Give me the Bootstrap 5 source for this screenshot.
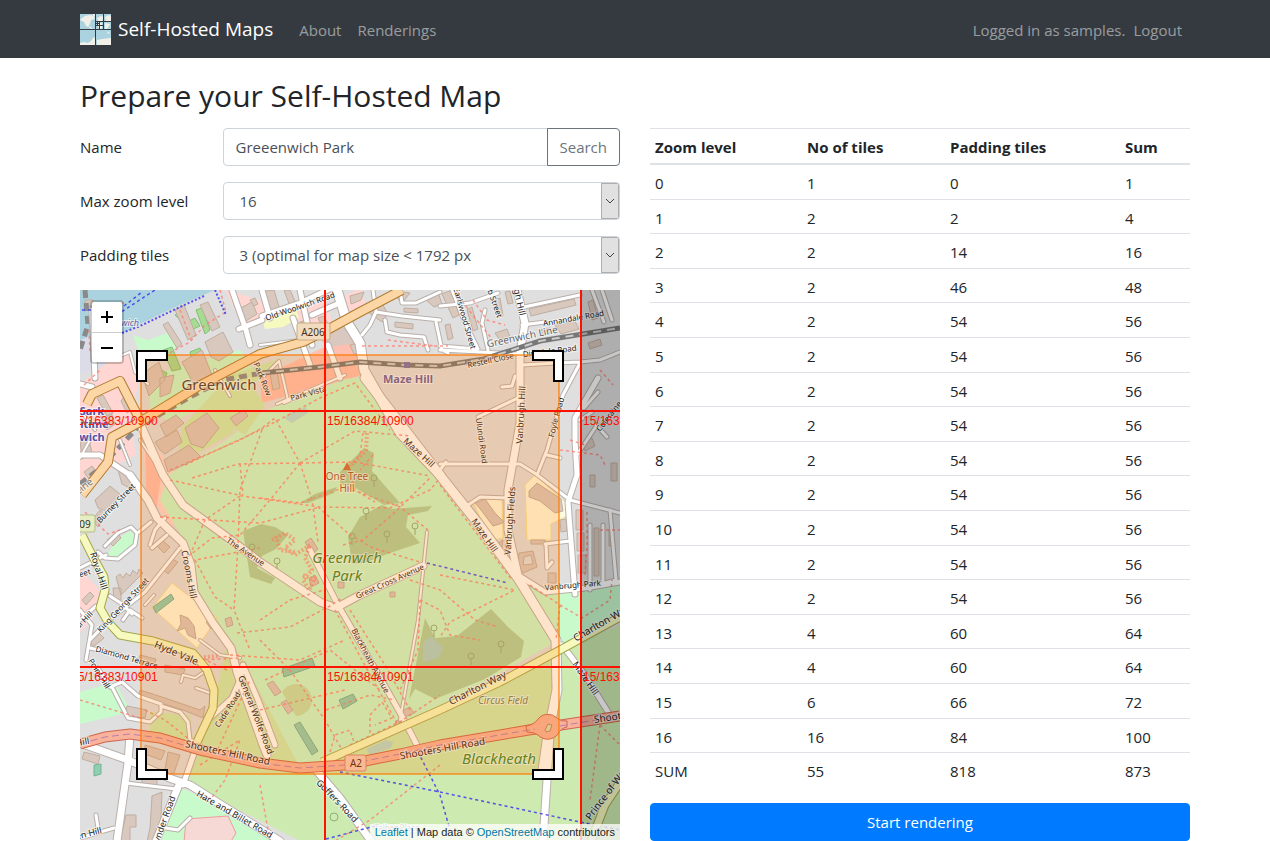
<!DOCTYPE html>
<html lang="en">
<head>
<meta charset="utf-8">
<meta name="viewport" content="width=device-width, initial-scale=1">
<title>Self-Hosted Maps</title>
<link href="https://cdn.jsdelivr.net/npm/bootstrap@5.3.0/dist/css/bootstrap.min.css" rel="stylesheet">
<style>
  body { font-family: "Open Sans", "Noto Sans", sans-serif; font-size: 15px; line-height: 24px; color: #212529; }
  .container, .row { --bs-gutter-x: 30px; }
  .topbar { background: #343a40; padding: 8px 0; }
  .topbar .navbar-brand { font-size: 19px; line-height: 32px; padding: 5px 0; margin-right: 18px; gap: 7px; }
  .topbar .nav-link, .topbar .navbar-text { color: rgba(255,255,255,.5); padding-top: 9px; padding-bottom: 7px; }
  .page-title { font-size: 30px; line-height: 38px; font-weight: 400; margin: 19px 0 13px; }
  .form-control, .form-select, .btn { font-size: 15px; line-height: 24px; border-radius: 4px; }
  .form-control, .form-select { color: #495057; border-color: #ced4da; }
  .col-form-label { padding-top: 8px; padding-bottom: 6px; }
  .btn-search { color: #6c757d; border-color: #6c757d; }
  .form-select { padding: 6px 24px 6px 16px; background-size: 18px 36px; background-position: right 0 center;
    background-image: url("data:image/svg+xml,%3Csvg xmlns='http://www.w3.org/2000/svg' width='18' height='36'%3E%3Crect x='.5' y='.5' width='17' height='35' fill='%23e1e1e1' stroke='%23adadad'/%3E%3Cpath d='M5 16l4 4 4-4' fill='none' stroke='%23444'/%3E%3C/svg%3E"); }
  .map-view { height: 550px; position: relative; overflow: hidden; background: #e0dfdf; }
  .map-view > svg { display: block; width: 100%; height: 100%; }
  .way-3 { stroke-width: calc(3px + var(--edge)); }
  .way-4 { stroke-width: calc(4px + var(--edge)); }
  .way-6 { stroke-width: calc(6px + var(--edge)); }
  .way-8 { stroke-width: calc(8px + var(--edge)); }
  .way-10 { stroke-width: calc(10px + var(--edge)); }
  .casing { --edge: 1px; fill: none; stroke: #b9b0ab; stroke-linecap: round; stroke-linejoin: round; }
  .surface { --edge: -1px; fill: none; stroke: #fff; stroke-linecap: round; stroke-linejoin: round; }
  .zoom-box { position: absolute; left: 10px; top: 10px; border: 2px solid rgba(0,0,0,.2); border-radius: 4px; background-clip: padding-box; }
  .zoom-box button { display: block; width: 30px; height: 30px; padding: 0; border: 0; background: #fff; border-radius: 2px 2px 0 0; }
  .zoom-box button + button { border-top: 1px solid #ccc; border-radius: 0 0 2px 2px; }
  .zoom-box svg { display: block; margin: 0 auto; }
  .map-credit { position: absolute; right: 0; bottom: 0; padding: 0 5px; font: 11px/16px "Liberation Sans", sans-serif; color: #222; background: rgba(255,255,255,.75); }
  .map-credit a { color: #0078a8; text-decoration: none; }
  .tiles { margin-bottom: 15px; color: #212529; border-top: 1px solid #dee2e6; }
  .tiles th { font-weight: 700; padding: 6px 5px 4px; border-bottom: 2px solid #dee2e6; }
  .tiles td { padding: 6px 5px 4px; border: 0; border-bottom: 1px solid #dee2e6; }
  .tiles tbody tr:nth-child(5n+2) td, .tiles tbody tr:nth-child(5n+4) td { padding-bottom: 3px; }
  .tiles tbody tr:last-child td { border-bottom-color: transparent; }
  .c-zoom { width: 152px; } .c-tiles { width: 143px; } .c-pad { width: 175px; }
  .btn-render { background: #007bff; border-color: #007bff; color: #fff; }
</style>
</head>
<body>
<nav class="topbar navbar navbar-expand navbar-dark">
  <div class="container">
    <a class="navbar-brand d-flex align-items-center" href="#">
      <svg width="31" height="31" viewBox="0 0 31 31" aria-hidden="true">
        <rect width="31" height="31" fill="#aad3df"/>
        <path fill="#f2efe9" d="M2 4l3-2 5-1 4 1 1 3-4 1-1 4-2 3-2-1-2-4-4-2zM13 0h2v2l-2 1zM17 4l4-2 3 1-2 4-3 2zM25 3l4-2 2 1v5h-5zM17 9h5v6h-3zM25 9l5 1-2 4-3 2zM0 29l4-1 4 1 3-2 2-3 2-1v8H0zM17 26l5-1 9-1v7H17zM27 17l3 2-2 1zM8 12l3 1 2 3-2-1z"/>
        <path stroke="#343a40" fill="none" d="M15.500 0V31M0 15.500H31M15.500 7.500H31M23.500 0V15.500M15.500 11.500H23.500M19.500 7.500V15.500M17.500 7.500V11.500M15.500 9.500H19.500"/>
      </svg>
      Self-Hosted Maps
    </a>
    <ul class="navbar-nav me-auto">
      <li class="nav-item"><a class="nav-link" href="#">About</a></li>
      <li class="nav-item"><a class="nav-link" href="#">Renderings</a></li>
    </ul>
    <span class="navbar-text">Logged in as samples.</span>
    <ul class="navbar-nav"><li class="nav-item"><a class="nav-link" href="#">Logout</a></li></ul>
  </div>
</nav>

<main class="container">
  <h1 class="page-title">Prepare your Self-Hosted Map</h1>
  <div class="row">
    <div class="col-md-6">
      <form>
        <div class="row mb-3">
          <label for="mapName" class="col-3 col-form-label">Name</label>
          <div class="col-9"><div class="input-group">
            <input id="mapName" type="text" class="form-control" value="Greeenwich Park">
            <button type="button" class="btn btn-search">Search</button>
          </div></div>
        </div>
        <div class="row mb-3">
          <label for="maxZoom" class="col-3 col-form-label text-nowrap">Max zoom level</label>
          <div class="col-9"><select id="maxZoom" class="form-select"><option>16</option></select></div>
        </div>
        <div class="row mb-3">
          <label for="padTiles" class="col-3 col-form-label text-nowrap">Padding tiles</label>
          <div class="col-9"><select id="padTiles" class="form-select"><option>3 (optimal for map size &lt; 1792 px</option></select></div>
        </div>
      </form>

      <div class="map-view">
        <svg viewBox="80 290 540 550" preserveAspectRatio="xMidYMid slice" role="img" aria-label="Map of Greenwich Park">
          <defs>
            <g id="streets">
              <path class="way-6" d="M232 290L246 330L250 345M239 329L262 320M262 316L300 303L340 284M300 290L312 345M293 318L310 365M328 345L340 378M312 315L342 302M262 290L270 318"/>
              <path class="way-10" d="M337 290L347 322L360 343L364 370L400 433L440 475"/>
              <path class="way-4" d="M373 290L376 312L402 316L440 320M385 320L387 332L400 335L424 337L428 350M376 312L370 325L362 335M400 290L402 303L416 303L440 292M436 322L442 350L448 353M440 306L470 303L498 293M452 290L463 318L478 349L440 346M440 350L560 356M524 307L580 295M522 325L545 322M488 350L482 323L485 310"/>
              <path class="way-8" d="M517 290L525 323L520 353L520 423L508 490L508 530L518 575"/>
              <path class="way-4" d="M522 365L556 363L580 362L600 360L620 352M520 397L478 417M515 376L512 386L502 387M440 464L520 464L536 474L570 500L620 513M580 363L563 395L547 450L537 475M547 455L560 458"/>
              <path class="way-6" d="M598 378L575 418L575 440L577 475L568 502L575 594"/>
              <path class="way-4" d="M468 505L480 497L508 498M545 544L570 541M546 544L547 568L552 562M592 412L580 420M598 392L584 408M596 425L607 437M592 290L604 322M602 290L612 320M610 510L616 580L590 587M590 525V590M603 525V585M597 425L577 455M440 470L446 462"/>
              <path class="way-6" d="M518 575L545 592L585 588L620 582M562 645L585 675L608 712"/>
              <path class="way-8" d="M550 735L543 841M80 743L128 760L172 779L190 785L220 804L280 841M178 787L156 841M316 770L340 798L374 845M130 735L128 763L117 841"/>
              <path class="way-4" d="M126 783L176 789M80 838L114 828M96 815L98 828M166 828L178 830L190 818"/>
              <path class="way-6" d="M80 455L100 455L130 475L148 500M80 384L92 387M95 378L92 310"/>
              <path class="way-3" d="M80 458L90 440M110 360L130 352L135 372L148 384M80 410L95 430M120 440L130 465M140 440L160 470"/>
              <path class="way-4" d="M105 546L118 533L131 527L137 533L135 545L118 559L105 558L98 552M80 568L106 555M139 532L151 522M80 620L96 606M110 596L122 604L132 614M90 640L109 620L145 592L180 548M123 620L130 610L142 618M86 660L92 625L80 610M90 648L120 655M110 687L122 682L138 696L161 704L161 712L150 722L128 718L112 687M161 706L180 712L188 722L190 740L198 743M165 518L155 530L150 545M167 535L152 548M98 668L110 687"/>
              <path class="way-3" d="M181 682L183 675L195 678L207 670M196 688L213 694M154 595L145 605M230 396L215 370M260 345L300 340M263 377L279 361L288 400M277 404L345 375M284 403L300 396M200 640L220 655L240 658"/>
              <path class="way-8" d="M130 475L148 500L157 518L183 543L191 565L194 592L213 623L231 648L237 672L263 745L267 755M140 423L163 475L183 505L227 537L260 562L320 602L336 608L358 596L423 566"/>
              <path class="way-6" d="M310 550L338 605L370 660L403 718L418 747M210 718L232 698L240 680L243 665M243 665L258 700L275 745M197 745L183 785"/>
              <path class="way-10" d="M365 378L442 478L477 522L518 578L556 640L557 690L548 735L543 770"/>
              <path class="way-3" d="M427 532L418 620L400 720"/>
            </g>
            <g id="mainroad">
              <path stroke-width="10" d="M87 404L92 394L120 381L140 420M82 495L108 462L112 437L140 422L197 387L260 354L303 342L327 330L360 312L402 290"/>
            </g>
            <g id="secondary">
              <path stroke-width="9" d="M82 535L93 557L104 577L105 590L100 608L108 622L120 635L153 641L193 653L207 670L214 690L213 708L197 742M322 762L440 710L500 682L560 650L620 617M591 841L605 805L625 775"/>
            </g>
            <g id="trunk">
              <path stroke-width="11" d="M80 744L105 737L130 734L160 738L200 750L260 763L300 768L345 765L400 754L440 745L535 729L620 716"/>
            </g>
            <g id="blocks">
              <path d="M85 300h8v6h-8zM142 374l17-12 6 18-16 16zM160 378l14-3-4 18-10 4zM163 325l5-3 14 22-5 4zM175 310l9-5 12 30-8 5zM200 305l8-3 12 25-8 4zM205 342l18-10 10 20-14 9-8-4zM182 362l20-12 10 25-19 8zM237 310l15-8 5 12-16 10zM260 292l14-2 6 20-10 8zM284 290h6l8 18-6 4zM350 296l14-4-3 8-10 4zM368 312l12-12 8 14-6 8zM390 290l20 3-8 10zM424 298l14-6 4 12-8 3zM80 440l8-5 4 18-10 6zM100 415l10-6 5 15-8 6zM155 442l22-12 5 12-17 12-5-4zM185 428l22-15 12 15-16 20-12-4zM164 460l25-15 12 12-33 15zM160 425l16-10 8 8-18 14zM230 418l14-8 4 6-12 10z"/>
              <path d="M95 500l15-14 10 8-12 18-10-4zM107 540l10-8 4 6-8 8zM116 577l4-3 3 4 3-5 4 3 3-6 4 4 2-5 4 4-22 22zM113 588h8v12h-7zM92 520l8-10 6 5-8 12zM180 615l8 3 6 8 2 13-8-4-3-7-8 3 4-7zM206 622l7-4 4 6-6 5zM225 619l6-2 2 8-6 2zM127 706l20 4-2 8-20-2zM140 690l25 8 35 12 5-4-2 12-20-8-44-14zM145 745l20 6-4 9-16-6zM168 752l12 3-6 18-10 2zM152 796l10-4-2 50-14 4 4-18zM126 815h10v12h-6v14h-10zM142 775l15 3v8l-15-3zM84 752l16 4-2 8-16-5z"/>
              <path d="M475 503l10-4 10 14 9 9-4 2-7 2-12-16zM529 491l8-8 24 16 2 12-8 2-15-12-11-4zM519 553l14-2 4 16-14 6-5-8zM524 557l-1 8 10-1-2-9zM548 573h8v10h-8zM531 540h14v4h-14zM576 510h7v20h-7zM577 533h7v18h-7zM578 555h8v18h-8zM594 528h5v48h-5zM609 530v16h4v-16zM442 294l10-4 7 25-6 3zM467 310l5-3 6 22-5 2zM495 333l12-4 3 8-10 3zM529 309l45-10 2 6-45 11zM555 325l20-4 4 8-18 5zM267 684l6-3 8 11-6 4zM281 703l5-3 7 10-5 4zM270 374l7-2 3 16-7 2zM400 712l10-5 4 6-9 4zM397 720l8 4-4 6-8-3zM305 542l6-4 7 11-6 5zM309 578l6-3 4 8-8 4zM588 302l5-2 5 18-6 2zM588 343l12-4 2 6-12 4zM582 443l10-5 3 8-10 5zM590 475h5v12h-5zM611 463h6v18h-6zM338 582h6v6h-6zM390 592h5v5h-5z"/>
              <path d="M84 472l8-6 5 6-8 7zM118 470l12 8 4 12-12-6zM97 398l6-3 10 18-6 3zM125 395l8 14-6 4-6-12zM82 600l8-8 4 4-8 9zM98 632l6 6-10 8-6-4zM140 655l16 4-2 6-16-4zM165 665l20 4-2 6-18-3zM186 570l8-6 0 8-6 5zM162 540l8 7-6 6-7-7zM170 558l8 4-10 12-6-6zM250 300l5-2 3 6-4 2zM300 322l6-2 5 16-5 2zM318 318l6-2 4 8-6 2zM350 345l8-2 2 10-6 1zM395 322l18 2v5l-18-2zM404 308l14 1v4l-14-1zM445 325l5-1 3 14-5 2zM494 300l6-2 3 18-5 1zM505 292l5-1 3 12-5 1zM540 330l10-2 1 5-10 2zM505 545l6-2 2 8-6 1zM495 545l8-5-2 14zM560 520l6-1 1 12-6 1z"/>
            </g>
          </defs>

          <!-- land use -->
          <path fill="#e0dfdf" d="M80 290h540v550H80z"/>
          <path fill="#aad3df" d="M80 290H215L180 305L144 322L122 334L96 329L92 340L80 344z"/>
          <path fill="#dcdce8" d="M80 340l16-6 3 35-19 5zM98 330l25 5-5 35-20 5z"/>
          <path fill="#ffd6d1" d="M80 385l30-25 20-5 8 30-8 35 6 35-20 10-36 25zM225 290l35 10 10 22-26 6zM334 300l28-12 4 20-24 18zM80 570l20 20-8 30-12 12zM140 430l30 35 20 35-20 30-23-45zM295 310l30-10 8 25-30 10z"/>
          <path fill="#d8c8c0" d="M330 330l18-4 10 20-26 8-12-16z"/>
          <path fill="#ffbfb0" d="M260 378l62-30 35-5 5 32-100 28zM145 432l16 45-5 34-10-22z"/>
          <path fill="#f7fabf" d="M263 322l20-8 12-8 4 12-16 9-18 2z"/>
          <path fill="#c8facc" d="M168 475L185 465L225 441L262 412L345 379L363 377L400 433L440 478L477 524L517 580L556 642L440 706L322 762L300 768L240 655L213 620L197 598L190 550L160 500zM520 588L620 582V620L562 645zM80 692l35-10 16 30-51 12zM133 335l15 5 25-9 7 15-38 15zM150 375l90-25 20 30-90 43-20-15z"/>
          <path fill="#cdebb0" d="M230 375l55-18-40 34-20 23 10 18-58 33 5-38zM210 400l35-25 20 30-20 30-25-15zM225 650L212 715L190 745L300 768L240 655zM322 762L560 650L620 625V841H300L190 785V745L300 768zM150 712l40 3 3 26-43-8z"/>
          <path fill="#c8facc" d="M175 785l35 16 68 40H155zM107 555l12-18 12-6 5 7-4 12-16 9z"/>
          <path fill="#fffbdf" d="M152 608l20-25 45 35-20 30-28-25zM472 500l30-2 1 40-12 3zM525 485l10-10 31 28 1 13-16 8v16h-24z" stroke="#f3e292"/>
          <path fill="#add19e" d="M243 531l18-7 14 3 13 8-12 14-14 7-5 12 18 10-4 6-21-7zM300 503l15-9 22-7-3 6-26 10zM340 472l24-24 10 5-2 18 28 32-16 2-30-18-14-3zM348 537l12-20 22-12 10 4 40-3-4 5-20 4-2 12 14 16-30 10-26 10-12 1zM425 618l10 20 22-2 34-27 17 18 16 14-3 16-36 22-50 20-20-10-6 10 8-40z"/>
          <path fill="#aad3df" opacity=".65" d="M284 418l6-5 16-6 2 6-16 10zM366 749l20-9 7 2-2 6-21 7zM423 643l8-7 12 12-4 10-16 4z"/>
          <path fill="#8fceb0" stroke="#72b397" d="M282 669l30-11 3 8-31 11zM339 700l14-6 4 7-14 8zM294 725l6-3 18 29-6 4zM153 607l18-13 3 5-18 14zM94 765l7-1v10l-7 2z"/>
          <g fill="#a6dc91" stroke="#86bd76"><path d="M175 315l8-6 5 7-8 4zM187 322l8-4 5 8-9 4zM196 310l6-2 8 22-5 4zM155 367l12 6-4 10-12-4zM163 350l9-3 9 22-9 2zM190 352l10-4 5 20-10 4z"/></g>
          <path fill="#f6d8d4" stroke="#ee9da0" d="M186 819l42-3 8 17-6 10h-46z"/>
          <path fill="#c4dfa8" d="M282 692a16 16 0 1 1 14 24z"/>

          <use href="#blocks" fill="#d9c8be" stroke="#bfae9f" stroke-width="1"/>

          <!-- railway in tunnel and in the open -->
          <path fill="none" stroke="#8a8a8a" stroke-width="5" stroke-dasharray="8 5" d="M85 290L88 325L80 350M80 484L98 470L138 427L190 397L223 380L262 373"/>

          <use href="#streets" class="casing"/>
          <use href="#streets" class="surface"/>
          <path fill="none" stroke="#777" stroke-width="5" d="M262 373L320 367L360 362L405 365L440 366L484 359L540 341L620 328"/>
          <path fill="none" stroke="#ccc" stroke-width="2" stroke-dasharray="8 6" d="M262 373L320 367L360 362L405 365L440 366L484 359L540 341L620 328"/>
          <path fill="#7a70a8" d="M404 362h6v6h-6z"/>

          <!-- foot paths -->
          <g fill="none" stroke="#fa8072" stroke-opacity=".8" stroke-width="1.500" stroke-dasharray="3 3">
            <path d="M185 465L260 430L320 398L355 383L390 430M170 470L240 440L262 428L275 418L300 463L238 464L192 478M300 463L355 431L410 436M300 463L355 462L430 476M300 463L270 500L240 535M262 430L240 490L238 545L234 610L250 650M300 463L312 500L318 542M160 517L260 523L320 507M170 480L243 496L320 507L390 508L430 490L440 478M318 507L350 535L373 548L420 562M240 464L243 495M240 496L205 520L190 555L212 538L240 535M260 498L300 503L345 487L400 507L428 530M343 545L363 540L392 515L430 478M363 433L360 455L348 468L355 490L375 502M373 455L360 470M260 548L195 560L215 597L234 610M260 620L290 600L324 590M237 633L290 627L330 606L342 598M260 640L290 670L325 720L345 755M265 680L330 650L380 690M326 710L370 695L395 700M330 752L335 735L350 730L355 745M350 745L400 722L440 695M370 733L370 715L382 702L392 718L375 725M420 600L440 610L450 635L480 640M420 600L418 650L400 690M440 575L515 590L450 622L440 637M440 485L512 580M530 585L560 605L582 618L610 600L612 580M560 605L556 640M260 710L345 690M227 670L195 655L200 660L240 658M145 710L165 720L190 740M260 785L270 841M440 765L370 820L335 841M215 755L250 680M200 765L240 740L225 780L210 800M600 725L590 800M600 725L620 745M230 655L300 660L345 640M335 610L362 660L398 725M350 610L385 665L410 710M410 580L440 590L475 620L498 627"/>
            <path d="M220 290L226 312L205 325L190 342L160 358M180 310L192 342M104 308L124 303M89 330L90 352L118 343M84 385L100 370M85 512L108 534L120 530M455 292L475 318L493 340M473 300L487 320L505 325M362 346L448 346M388 340L435 346M560 450L600 455L605 465M570 440L585 445M600 370L613 385M587 512V545L585 575M600 530h20M80 700L140 718"/>
          </g>
          <g fill="none" stroke="#fa8072" stroke-width="4" stroke-dasharray="2 2" opacity=".6">
            <path d="M272 540L285 533L295 540L285 548L295 555L310 545L305 558L312 570L303 580L309 590L316 575M276 536L280 550L295 552M303 575L318 582M367 433L366 450L352 465M196 658L218 656"/>
          </g>
          <g fill="none" stroke="#3b36f0" stroke-opacity=".85" stroke-width="1.500" stroke-dasharray="3 3">
            <path stroke-width="2" stroke-dasharray="2 2" d="M215 290L226 315M122 333L140 326L180 307L204 296"/>
            <path d="M112 318L155 290M124 306L142 292M427 563L508 583M340 772L440 792L580 822L620 830M418 752L440 795L450 830M326 839L375 826L400 828M82 310h10"/>
          </g>

          <use href="#mainroad" fill="none" stroke="#b07a30" stroke-linejoin="round"/>
          <path fill="none" stroke="#fcd6a4" stroke-width="8" stroke-linejoin="round" d="M87 404L92 394L120 381L140 420M82 495L108 462L112 437L140 422L197 387L260 354L303 342L327 330L360 312L402 290"/>
          <use href="#secondary" fill="none" stroke="#a5a64e" stroke-linejoin="round"/>
          <path fill="none" stroke="#f6fabe" stroke-width="7" stroke-linejoin="round" d="M82 535L93 557L104 577L105 590L100 608L108 622L120 635L153 641L193 653L207 670L214 690L213 708L197 742M322 762L440 710L500 682L560 650L620 617M591 841L605 805L625 775"/>
          <use href="#trunk" fill="none" stroke="#cf6649" stroke-linejoin="round"/>
          <path fill="none" stroke="#f9b29c" stroke-width="9" stroke-linejoin="round" d="M80 744L105 737L130 734L160 738L200 750L260 763L300 768L345 765L400 754L440 745L535 729L620 716"/>
          <path fill="#f9b29c" stroke="#cf6649" d="M526 726q8-1 12-7a13 13 0 0 1 19-1q4 4 10 3v6q-6 1-9 7a13 13 0 0 1-20 1q-4-3-11-3z"/>
          <path fill="#dcdcb0" stroke="#b78a60" d="M545 730l3-6 4 1-2 6-4 1z"/>
          <path fill="none" stroke="#b97fa8" stroke-width="1" stroke-dasharray="7 4" d="M80 744L105 737L130 734L160 738L200 750L260 763L300 768L345 765L400 754L440 745L535 729M560 726L620 716"/>

          <!-- trees and hill marker -->
          <g fill="none" stroke="#8fae7c"><circle cx="366" cy="511" r="3"/><path d="M366 514v6"/><circle cx="387" cy="534" r="3"/><path d="M387 537v6"/><circle cx="352" cy="536" r="3"/><path d="M352 539v6"/><circle cx="415" cy="526" r="3"/><path d="M415 529v6"/><circle cx="374" cy="478" r="3"/><path d="M374 481v6"/><circle cx="501" cy="644" r="3"/><path d="M501 647v6"/><circle cx="471" cy="656" r="3"/><path d="M471 659v6"/><circle cx="434" cy="628" r="3"/><path d="M434 631v6"/><circle cx="252" cy="547" r="3"/><path d="M252 550v6"/><circle cx="277" cy="561" r="3"/><path d="M277 564v5"/><circle cx="334" cy="817" r="4"/></g>
          <path fill="#cf6d3c" d="M347 462l4 8h-8z"/>

          <!-- place names -->
          <g font-family="Noto Sans, sans-serif" font-size="8" fill="#222" stroke="#fff" stroke-opacity=".6" stroke-width="2" paint-order="stroke" text-anchor="middle">
            <text transform="translate(301 309) rotate(-19)">Old Woolwich Road</text>
            <text transform="translate(574 321) rotate(-10)">Annandale Road</text>
            <text transform="translate(523 340) rotate(-12)" font-size="10" fill="#666">Greenwich Line</text>
            <text transform="translate(491 363) rotate(-12)">Restell Close</text>
            <text transform="translate(550 354) rotate(-7)">Dinsdale Road</text>
            <text transform="translate(309 396) rotate(-16)">Park Vista</text>
            <text transform="translate(260 380) rotate(68)">Park Row</text>
            <text transform="translate(462 319) rotate(74)">Earlswood Street</text>
            <text transform="translate(491 301) rotate(70)">mb Street</text>
            <text transform="translate(516 300) rotate(78)" font-size="9">ugh Hill</text>
            <text transform="translate(524 415) rotate(-87)" font-size="9">Vanbrugh Hill</text>
            <text transform="translate(479 441) rotate(82)">Ulundi Road</text>
            <text transform="translate(559 418) rotate(-75)">Foyle Road</text>
            <text transform="translate(611 418) rotate(-52)">Coleraine</text>
            <text transform="translate(417 455) rotate(42)" font-size="9">Maze Hill</text>
            <text transform="translate(482 537) rotate(55)" font-size="9">Maze Hill</text>
            <text transform="translate(513 521) rotate(-86)" font-size="9">Vanbrugh Fields</text>
            <text transform="translate(573 588) rotate(-5)">Vanbrugh Park</text>
            <text transform="translate(603 626) rotate(-30)" font-size="10">Charlton Way</text>
            <text transform="translate(479 691) rotate(-27)" font-size="10">Charlton Way</text>
            <text transform="translate(583 680) rotate(55)" font-size="9">Maze Hill</text>
            <text transform="translate(244 554) rotate(34)">The Avenue</text>
            <text transform="translate(391 584) rotate(-24)">Great Cross Avenue</text>
            <text transform="translate(368 662) rotate(62)">Blackheath Avenue</text>
            <text transform="translate(186 575) rotate(79)" font-size="9">Crooms Hill</text>
            <text transform="translate(118 505) rotate(-46)">Burney Street</text>
            <text transform="translate(96 572) rotate(72)" font-size="9">Royal Hill</text>
            <text transform="translate(125 607) rotate(-47)">King George Street</text>
            <text transform="translate(126 660) rotate(16)">Diamond Terrace</text>
            <text transform="translate(175 656) rotate(23)" font-size="10">Hyde Vale</text>
            <text transform="translate(86 622) rotate(-45)">al Hill</text>
            <text transform="translate(84 576) rotate(-16)">reet</text>
            <text transform="translate(97 675) rotate(58)">Point Hill</text>
            <text transform="translate(230 711) rotate(-57)">Cade Road</text>
            <text transform="translate(253 716) rotate(69)" font-size="9">General Wolfe Road</text>
            <text transform="translate(227 756) rotate(12)" font-size="10">Shooters Hill Road</text>
            <text transform="translate(443 752) rotate(-10)" font-size="10">Shooters Hill Road</text>
            <text transform="translate(608 721) rotate(-8)" font-size="10">Shoot</text>
            <text transform="translate(83 745) rotate(-10)" font-size="9">Hill</text>
            <text transform="translate(233 817) rotate(30)" font-size="9">Hare and Billet Road</text>
            <text transform="translate(166 824) rotate(-70)" font-size="9">Wynder Road</text>
            <text transform="translate(335 803) rotate(46)" font-size="9">Goffers Road</text>
            <text transform="translate(87 837) rotate(-14)" font-size="9">een Hill</text>
            <text transform="translate(612 792) rotate(-53)" font-size="10">Prince of Wales</text>
            <text transform="translate(86 489) rotate(-38)" font-size="10" fill="#777">Line</text>
            <text x="219" y="390" font-size="15" fill="#4a3b35">Greenwich</text>
            <text x="408" y="383" font-size="11" font-weight="700" fill="#6b609f">Maze Hill</text>
            <text x="347" y="480" font-size="10" fill="#9b5b35">One Tree</text>
            <text x="347" y="492" font-size="10" fill="#9b5b35">Hill</text>
            <g font-style="italic" fill="#368a26"><text x="347" y="563" font-size="15">Greenwich</text><text x="347" y="581" font-size="15">Park</text><text x="499" y="764" font-size="15">Blackheath</text><text x="503" y="704" font-size="10" fill="#6f8456">Circus Field</text></g>
            <g font-weight="700" fill="#5353a8" font-size="11"><text x="92" y="415">Sark</text><text x="92" y="428">ritime</text><text x="92" y="441">wich</text></g>
            <text x="130" y="326" font-size="9" font-style="italic" fill="#6b609f">wich</text>
            <text x="397" y="831" fill="#888">Talbot Place</text>
          </g>
          <g font-family="Noto Sans, sans-serif" font-size="10" text-anchor="middle">
            <rect x="297" y="323" width="33" height="17" rx="2" fill="#f2dcc0" stroke="#c9aa80"/><text x="313" y="336" fill="#443322">A206</text>
            <rect x="345" y="755" width="21" height="16" rx="2" fill="#f5cbbb" stroke="#d68a70"/><text x="356" y="767" fill="#552211">A2</text>
            <rect x="76" y="515" width="19" height="17" rx="2" fill="#e7edc2" stroke="#b6bd84"/><text x="85" y="528" fill="#333">09</text>
          </g>

          <!-- area outside the bounds, selection and tile grid -->
          <path fill="#000" opacity=".22" d="M581 290h39v550h-39z"/>
          <rect x="141" y="355" width="418" height="419" fill="#ff7800" fill-opacity=".2" stroke="#ff7800" stroke-opacity=".6" stroke-width="2"/>
          <path stroke="#f10" stroke-width="2" d="M325 290v550M581 290v550M80 411h540M80 667h540"/>
          <g font-family="Liberation Sans, sans-serif" font-size="12" fill="#f10">
            <text x="71" y="425">15/16383/10900</text><text x="327" y="425">15/16384/10900</text><text x="583" y="425">15/16385/10900</text>
            <text x="71" y="681">15/16383/10901</text><text x="327" y="681">15/16384/10901</text><text x="583" y="681">15/16385/10901</text>
          </g>
          <path fill="#fff" stroke="#000" stroke-width="2" d="M137 351h30v9h-21v21h-9zM563 351h-30v9h21v21h9zM137 779h30v-9h-21v-21h-9zM563 779h-30v-9h21v-21h9z"/>
        </svg>
        <div class="zoom-box">
          <button type="button" aria-label="Zoom in"><svg width="14" height="14"><path d="M1 7h12M7 1v12" stroke="#000" stroke-width="2"/></svg></button>
          <button type="button" aria-label="Zoom out"><svg width="14" height="14"><path d="M1 7h12" stroke="#000" stroke-width="2"/></svg></button>
        </div>
        <div class="map-credit"><a href="#">Leaflet</a> | Map data © <a href="#">OpenStreetMap</a> contributors</div>
      </div>
    </div>

    <div class="col-md-6">
      <table class="table tiles">
        <thead><tr><th class="c-zoom">Zoom level</th><th class="c-tiles">No of tiles</th><th class="c-pad">Padding tiles</th><th>Sum</th></tr></thead>
        <tbody>
          <tr><td>0</td><td>1</td><td>0</td><td>1</td></tr>
          <tr><td>1</td><td>2</td><td>2</td><td>4</td></tr>
          <tr><td>2</td><td>2</td><td>14</td><td>16</td></tr>
          <tr><td>3</td><td>2</td><td>46</td><td>48</td></tr>
          <tr><td>4</td><td>2</td><td>54</td><td>56</td></tr>
          <tr><td>5</td><td>2</td><td>54</td><td>56</td></tr>
          <tr><td>6</td><td>2</td><td>54</td><td>56</td></tr>
          <tr><td>7</td><td>2</td><td>54</td><td>56</td></tr>
          <tr><td>8</td><td>2</td><td>54</td><td>56</td></tr>
          <tr><td>9</td><td>2</td><td>54</td><td>56</td></tr>
          <tr><td>10</td><td>2</td><td>54</td><td>56</td></tr>
          <tr><td>11</td><td>2</td><td>54</td><td>56</td></tr>
          <tr><td>12</td><td>2</td><td>54</td><td>56</td></tr>
          <tr><td>13</td><td>4</td><td>60</td><td>64</td></tr>
          <tr><td>14</td><td>4</td><td>60</td><td>64</td></tr>
          <tr><td>15</td><td>6</td><td>66</td><td>72</td></tr>
          <tr><td>16</td><td>16</td><td>84</td><td>100</td></tr>
          <tr><td>SUM</td><td>55</td><td>818</td><td>873</td></tr>
        </tbody>
      </table>
      <button type="button" class="btn btn-render w-100">Start rendering</button>
    </div>
  </div>
</main>
<script src="https://cdn.jsdelivr.net/npm/bootstrap@5.3.0/dist/js/bootstrap.bundle.min.js"></script>
</body>
</html>
